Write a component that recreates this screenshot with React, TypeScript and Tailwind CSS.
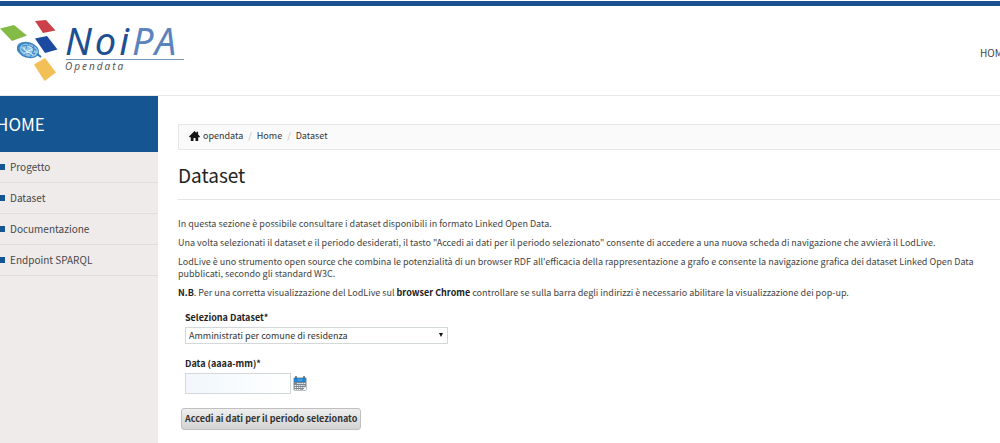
const menuItems = ["Progetto", "Dataset", "Documentazione", "Endpoint SPARQL"];

const Logo = () => {
  return (
    <a href="#" aria-label="NoiPA Opendata" className="block w-[190px]">
      <svg viewBox="0 0 190 70" className="block w-full" fontFamily="'Noto Sans', sans-serif" fontStyle="italic">
        <path d="M0 12.500L14 9l13 10.500L12 25z" fill="#83bb46" />
        <path d="M35 5l11-1 9.500 10.500L43 17z" fill="#cc4149" />
        <path d="M35 22.500l12-2.500 10.500 13.500L45 37z" fill="#1c4aa0" />
        <path d="M34 48.500l11-6.500 11 14.500L44.500 65z" fill="#f3bf57" />
        <g transform="rotate(18 28 34)">
          <ellipse cx="28" cy="34" rx="11.500" ry="7.800" fill="#3f86c3" />
          <ellipse cx="29" cy="34" rx="9.500" ry="6.200" fill="#8fc6e6" />
          <path d="M21 32c5-3 10-3 15 0M21 35c5 3 10 3 15 0M27 28c-2 4-2 8 0 12M32 28c2 4 2 8 0 12" fill="none" stroke="#3d83c2" strokeWidth="1" />
          <path d="M23 33l4 3 5-4M25 38l5-2 4 1M26 30l5 1" fill="none" stroke="#e3f3fb" strokeWidth="1" />
        </g>
        <path d="M37 38l4 3" stroke="#3475b5" strokeWidth="2" />
        <text x="65" y="39" fontSize="38" letterSpacing="3" fill="#1d4f92">
          Noi<tspan fill="#5b83bd">PA</tspan>
        </text>
        <path d="M66 43.500h118" stroke="#7795b8" strokeWidth="1" />
        <text x="65" y="54" fontSize="10" letterSpacing="2" fill="#56565a">Opendata</text>
      </svg>
    </a>
  );
};

const HouseIcon = () => {
  return (
    <svg viewBox="0 0 11 10" className="w-[11px] h-[10px]" fill="#151515">
      <path d="M5.500 0L0 5.400l.6.800h1.200V10h2.700V7h2v3h2.700V6.200h1.200l.6-.8-1.900-1.900V.800H7.500v1.100z" />
    </svg>
  );
};

const CalendarIcon = () => {
  return (
    <svg viewBox="0 0 14 15" className="w-[14px] h-[15px]">
      <rect x=".5" y="1.500" width="13" height="13" rx="1" fill="#7b858e" />
      <rect x="1" y="2" width="12" height="4" fill="#2587d3" />
      <path d="M3 0v3M11 0v3" stroke="#4d667c" strokeWidth="1.500" />
      <path d="M5 4h4" stroke="#67b9f1" />
      <path d="M4 7.500h9M1.500 9.500h11M1.500 11.500h11M1.500 13.500h7" stroke="#f1f4f6" strokeWidth="1.200" strokeDasharray="1.500 .7" />
      <path d="M9.500 14l3.500-3.500V14z" fill="#fff" />
    </svg>
  );
};

const Header = () => {
  return (
    <header className="flex justify-between h-[95px] border-t-5 border-t-[#1a5090] border-b border-b-[#e8e8e8] mt-px">
      <div className="pt-2.5">
        <Logo />
      </div>
      <nav className="w-5 pt-[35px] overflow-hidden">
        <a href="#" className="block text-[10px] leading-6 text-[#444]">HOME</a>
      </nav>
    </header>
  );
};

const Sidebar = () => {
  return (
    <aside className="w-[158px] shrink-0 bg-[#efebeb]">
      <h2 className="flex items-center h-14 -indent-1 bg-[#155591] text-white text-[17px]">HOME</h2>
      <ul>
        {menuItems.map((item) => (
          <li key={item} className="border-b border-[#e0dddd]">
            <a href="#" className="flex items-center gap-[5px] h-[30px] text-[10px] leading-4 text-[#484848]">
              <span className="w-[5px] h-[6px] bg-[#155591]" />
              {item}
            </a>
          </li>
        ))}
      </ul>
    </aside>
  );
};

const Breadcrumb = () => {
  return (
    <nav className="flex items-center h-[26px] pl-2.5 pb-0.5 border border-r-0 border-[#e6e6e6] rounded-l-xs bg-[#fafafa] text-[9px] leading-4 text-[#333]">
      <HouseIcon />
      <a href="#" className="ml-[3px]">opendata</a>
      <span className="mx-[5px] text-[#bbb]">/</span>
      <a href="#">Home</a>
      <span className="mx-[5px] text-[#bbb]">/</span>
      <a href="#">Dataset</a>
    </nav>
  );
};

const DatasetForm = () => {
  return (
    <form className="flex flex-col items-start mt-[13px] pl-[7px] text-[9px] leading-3 text-[#222]">
      <label htmlFor="dataset" className="font-bold">Seleziona Dataset*</label>
      <div className="relative mt-[3px] w-[263px]">
        <select id="dataset" className="block w-full h-[17px] pl-[3px] appearance-none border border-[#d3d8da] bg-white text-[#333]">
          <option>Amministrati per comune di residenza</option>
        </select>
        <svg viewBox="0 0 4 4" className="absolute right-[5px] top-[6px] size-1 pointer-events-none">
          <path d="M0 0h4L2 4z" fill="#111" />
        </svg>
      </div>
      <label htmlFor="period" className="mt-[14px] font-bold">Data (aaaa-mm)*</label>
      <div className="flex items-center gap-0.5 mt-[3px]">
        <input id="period" type="text" className="w-[106px] h-[21px] px-1 border border-[#d3d8da] bg-linear-to-r from-[#f1f7fc] to-white" />
        <button type="button" aria-label="Calendario">
          <CalendarIcon />
        </button>
      </div>
      <button type="button" className="h-[22px] -ml-1 mt-[14px] px-[3px] border border-[#c0c0c0] rounded-[3px] bg-linear-to-b from-[#efefef] to-[#d2d2d2] font-bold whitespace-nowrap text-[#333]">
        Accedi ai dati per il periodo selezionato
      </button>
    </form>
  );
};

const App = () => {
  return (
    <div className="min-h-screen flex flex-col overflow-hidden bg-white font-['Noto_Sans_CJK_SC',sans-serif]">
      <Header />
      <div className="flex grow">
        <Sidebar />
        <main className="grow min-w-0 pl-5 pt-7 pb-3">
          <Breadcrumb />
          <h1 className="pt-[11px] pb-2.5 border-b border-[#e4e4e4] text-[19px] leading-7 text-[#222]">Dataset</h1>
          <div className="flex flex-col gap-[7px] mt-[18px] pr-5 text-[9px] leading-3 text-[#444]">
            <p>In questa sezione è possibile consultare i dataset disponibili in formato Linked Open Data.</p>
            <p>
              Una volta selezionati il dataset e il periodo desiderati, il tasto "Accedi ai dati per il periodo selezionato" consente di
              accedere a una nuova scheda di navigazione che avvierà il LodLive.
            </p>
            <p>
              LodLive è uno strumento open source che combina le potenzialità di un browser RDF all'efficacia della rappresentazione a
              grafo e consente la navigazione grafica dei dataset Linked Open Data pubblicati, secondo gli standard W3C.
            </p>
            <p>
              <b className="text-[#222]">N.B</b>. Per una corretta visualizzazione del LodLive sul <b className="text-[#222]">browser Chrome</b> controllare
              se sulla barra degli indirizzi è necessario abilitare la visualizzazione dei pop-up.
            </p>
          </div>
          <DatasetForm />
        </main>
      </div>
    </div>
  );
};

export default App;
